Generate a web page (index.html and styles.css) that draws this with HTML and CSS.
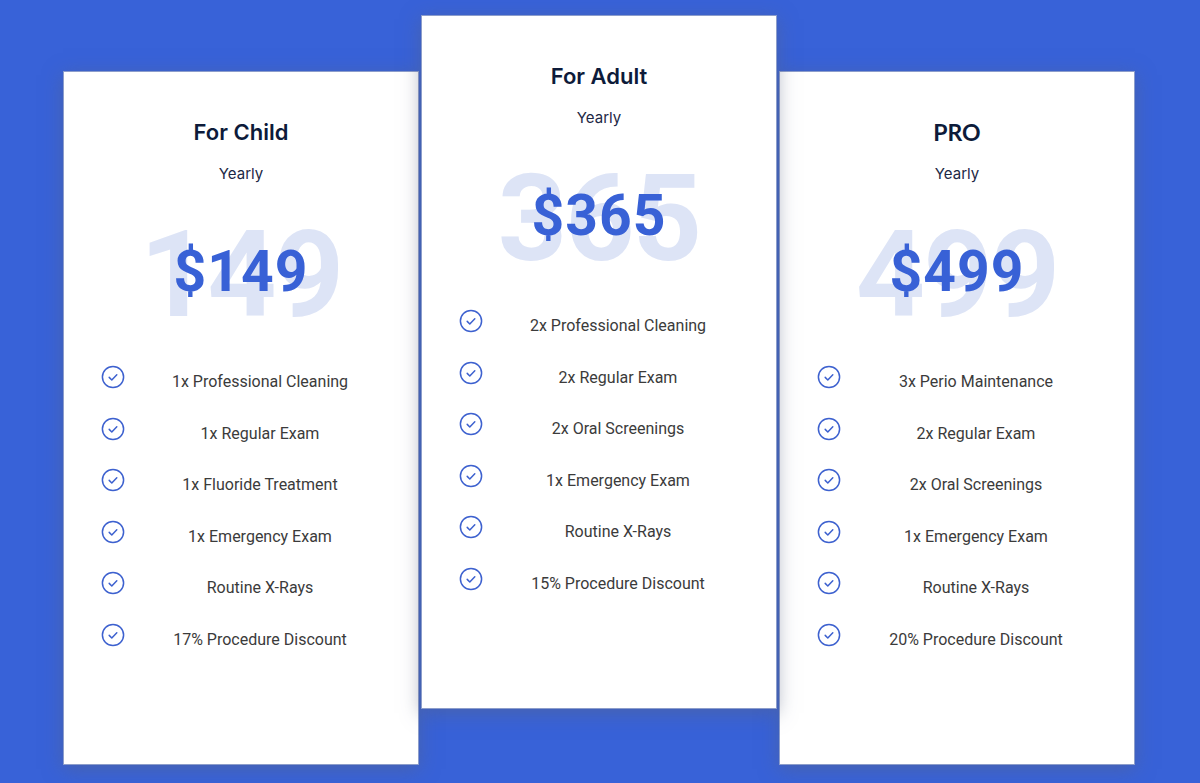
FILE: index.html
```html
<!DOCTYPE html>
<html lang="en">
<head>
<meta charset="utf-8">
<title>Pricing</title>
<link rel="stylesheet" href="styles.css">
</head>
<body>
<main class="plans">
  <section class="card side">
    <h2 class="title">For Child</h2>
    <p class="period">Yearly</p>
    <div class="price"><span class="price-bg">149</span><span class="price-fg">$149</span></div>
    <ul class="features">
      <li><svg class="check" viewBox="0 0 24 24"><circle cx="12" cy="12" r="10.6"/><path d="M8.2 12.4l2.6 2.6 5-5.2"/></svg><span>1x Professional Cleaning</span></li>
      <li><svg class="check" viewBox="0 0 24 24"><circle cx="12" cy="12" r="10.6"/><path d="M8.2 12.4l2.6 2.6 5-5.2"/></svg><span>1x Regular Exam</span></li>
      <li><svg class="check" viewBox="0 0 24 24"><circle cx="12" cy="12" r="10.6"/><path d="M8.2 12.4l2.6 2.6 5-5.2"/></svg><span>1x Fluoride Treatment</span></li>
      <li><svg class="check" viewBox="0 0 24 24"><circle cx="12" cy="12" r="10.6"/><path d="M8.2 12.4l2.6 2.6 5-5.2"/></svg><span>1x Emergency Exam</span></li>
      <li><svg class="check" viewBox="0 0 24 24"><circle cx="12" cy="12" r="10.6"/><path d="M8.2 12.4l2.6 2.6 5-5.2"/></svg><span>Routine X-Rays</span></li>
      <li><svg class="check" viewBox="0 0 24 24"><circle cx="12" cy="12" r="10.6"/><path d="M8.2 12.4l2.6 2.6 5-5.2"/></svg><span>17% Procedure Discount</span></li>
    </ul>
  </section>
  <section class="card featured">
    <h2 class="title">For Adult</h2>
    <p class="period">Yearly</p>
    <div class="price"><span class="price-bg">365</span><span class="price-fg">$365</span></div>
    <ul class="features">
      <li><svg class="check" viewBox="0 0 24 24"><circle cx="12" cy="12" r="10.6"/><path d="M8.2 12.4l2.6 2.6 5-5.2"/></svg><span>2x Professional Cleaning</span></li>
      <li><svg class="check" viewBox="0 0 24 24"><circle cx="12" cy="12" r="10.6"/><path d="M8.2 12.4l2.6 2.6 5-5.2"/></svg><span>2x Regular Exam</span></li>
      <li><svg class="check" viewBox="0 0 24 24"><circle cx="12" cy="12" r="10.6"/><path d="M8.2 12.4l2.6 2.6 5-5.2"/></svg><span>2x Oral Screenings</span></li>
      <li><svg class="check" viewBox="0 0 24 24"><circle cx="12" cy="12" r="10.6"/><path d="M8.2 12.4l2.6 2.6 5-5.2"/></svg><span>1x Emergency Exam</span></li>
      <li><svg class="check" viewBox="0 0 24 24"><circle cx="12" cy="12" r="10.6"/><path d="M8.2 12.4l2.6 2.6 5-5.2"/></svg><span>Routine X-Rays</span></li>
      <li><svg class="check" viewBox="0 0 24 24"><circle cx="12" cy="12" r="10.6"/><path d="M8.2 12.4l2.6 2.6 5-5.2"/></svg><span>15% Procedure Discount</span></li>
    </ul>
  </section>
  <section class="card side">
    <h2 class="title pro">PRO</h2>
    <p class="period">Yearly</p>
    <div class="price"><span class="price-bg">499</span><span class="price-fg">$499</span></div>
    <ul class="features">
      <li><svg class="check" viewBox="0 0 24 24"><circle cx="12" cy="12" r="10.6"/><path d="M8.2 12.4l2.6 2.6 5-5.2"/></svg><span>3x Perio Maintenance</span></li>
      <li><svg class="check" viewBox="0 0 24 24"><circle cx="12" cy="12" r="10.6"/><path d="M8.2 12.4l2.6 2.6 5-5.2"/></svg><span>2x Regular Exam</span></li>
      <li><svg class="check" viewBox="0 0 24 24"><circle cx="12" cy="12" r="10.6"/><path d="M8.2 12.4l2.6 2.6 5-5.2"/></svg><span>2x Oral Screenings</span></li>
      <li><svg class="check" viewBox="0 0 24 24"><circle cx="12" cy="12" r="10.6"/><path d="M8.2 12.4l2.6 2.6 5-5.2"/></svg><span>1x Emergency Exam</span></li>
      <li><svg class="check" viewBox="0 0 24 24"><circle cx="12" cy="12" r="10.6"/><path d="M8.2 12.4l2.6 2.6 5-5.2"/></svg><span>Routine X-Rays</span></li>
      <li><svg class="check" viewBox="0 0 24 24"><circle cx="12" cy="12" r="10.6"/><path d="M8.2 12.4l2.6 2.6 5-5.2"/></svg><span>20% Procedure Discount</span></li>
    </ul>
  </section>
</main>
</body>
</html>
```

FILE: styles.css
```css
* { box-sizing: border-box; }
html, body { margin: 0; padding: 0; }
body {
  background: #3862d8;
  width: 1200px;
  height: 783px;
  overflow: hidden;
  font-family: Roboto, "Liberation Sans", sans-serif;
}
.plans {
  display: flex;
  align-items: flex-start;
  gap: 2px;
  padding: 15px 0 0 63px;
}
.card {
  width: 356px;
  height: 694px;
  background: #fff;
  border: 1px solid #8c9dcb;
  box-shadow: 0 4px 18px rgba(90, 100, 130, 0.5);
  padding-top: 45px;
  text-align: center;
  position: relative;
}
.card.side { margin-top: 56px; }
.card.featured { z-index: 1; }
.title {
  margin: 0;
  font-family: Inter, "Open Sans", sans-serif;
  font-weight: 600;
  font-size: 22px;
  line-height: 30px;
  color: #0d1b3a;
}
.title.pro { font-family: Lato, sans-serif; font-weight: 700; font-size: 23px; }
.period {
  margin: 16px 0 0;
  font-family: Inter, "Open Sans", sans-serif;
  font-size: 15px;
  line-height: 22px;
  color: #1d2845;
}
.price {
  margin-top: 12px;
  height: 150px;
  display: grid;
  place-items: center;
  font-family: Roboto, sans-serif;
  font-weight: 700;
}
.price > span { grid-area: 1 / 1; }
.price-bg {
  font-size: 121px;
  line-height: 1;
  color: #dde4f6;
  letter-spacing: -2px;
  margin-top: 6px;
}
.price-fg {
  font-size: 57px;
  line-height: 1;
  color: #3861d6;
  letter-spacing: 1px;
  margin-top: -2px;
}
.features {
  list-style: none;
  margin: 18px 0 0;
  padding: 0 37px;
}
.features li {
  display: flex;
  align-items: flex-start;
  gap: 14px;
  height: 51.5px;
}
.check {
  width: 24px;
  height: 24px;
  flex: none;
  fill: none;
  stroke: #3d61cf;
  stroke-width: 1.5;
  stroke-linecap: round;
  stroke-linejoin: round;
}
.features span {
  flex: 1;
  text-align: center;
  font-size: 16px;
  line-height: 24px;
  padding-top: 5px;
  color: #3b3b3b;
}
```
